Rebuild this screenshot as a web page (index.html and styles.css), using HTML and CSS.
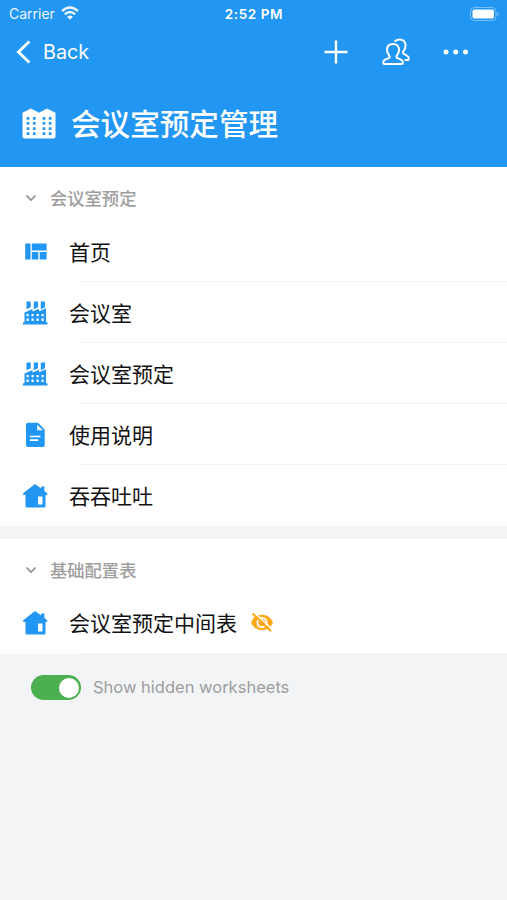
FILE: index.html
```html
<!DOCTYPE html>
<html lang="zh-CN">
<head>
<meta charset="utf-8">
<meta name="viewport" content="width=device-width, initial-scale=1">
<title>会议室预定管理</title>
<link rel="stylesheet" href="styles.css">
</head>
<body>
<svg class="defs" width="0" height="0" aria-hidden="true">
  <symbol id="factory" viewBox="0 0 26 26">
    <path d="M4.500 1.500h4.200v5.800L4.500 9.300zM11.800 1.500H16v5.800l-4.200 2zM18.800 1.500H23v5.800l-4.200 2zM2.500 12.500l8-3.500v2.500l6.500-2.800v2.500l7-3V23H2.500zM1 22.200h24.500v2.300H1z"/>
    <path class="cut" d="M4.500 14h2.200v2.300H4.500zM9.500 14h2.200v2.300H9.500zM14.500 14h2.200v2.300h-2.200zM19.500 14h2.200v2.300h-2.200zM4.500 18.600h2.200v2.300H4.500zM9.500 18.600h2.200v2.300H9.500zM14.500 18.600h2.200v2.300h-2.200zM19.500 18.600h2.200v2.300h-2.200z"/>
  </symbol>
  <symbol id="home" viewBox="0 0 26 26">
    <path d="M13 1l6.200 4.500V3.500h3.200V8l2.800 2.200v1.800h-1.700v11a1.500 1.500 0 0 1-1.500 1.500H5A1.500 1.500 0 0 1 3.500 23V12H1.200v-1.800z"/>
    <path class="cut" d="M16 13.500h4.500v8H16z"/>
  </symbol>
  <symbol id="chevron" viewBox="0 0 12 8"><path d="M1.500 1.500L6 6l4.500-4.500"/></symbol>
</svg>
<header class="header">
  <div class="status">
    <div class="carrier"><span>Carrier</span>
      <svg class="wifi" viewBox="0 0 18 14"><path d="M1 5Q9-2 17 5M3.800 8.300q5.200-4.400 10.400 0"/><path class="dot" d="M6 10.800Q9 8.400 12 10.800L9 13.800z"/></svg>
    </div>
    <div class="time">2:52 PM</div>
    <svg class="battery" viewBox="0 0 30 14"><rect class="shell" x=".5" y=".5" width="25.500" height="13" rx="4"/><rect x="2.500" y="2.500" width="21.500" height="9" rx="2"/><path class="tip" d="M27.500 5q2.500 2 0 4z"/></svg>
  </div>
  <nav class="nav">
    <a class="back"><svg viewBox="0 0 16 24"><path d="M13.300 1.500L2.500 12l10.800 10.500"/></svg>Back</a>
    <div class="actions">
      <svg class="plus" viewBox="0 0 24 24"><path d="M12 .5v23M.5 12h23"/></svg>
      <svg class="people" viewBox="0 0 28 28"><path d="M11 5.900C7 5.900 5 8.500 5 11.800c0 2.400.8 4.200 2.100 5.500 1 1.100.7 2.300-.6 2.900l-3.300 1.400C1.900 22.200 1.200 23 1.200 24.800q0 1.200 1.200 1.200h17.300q1.200 0 1.200-1.200c0-1.800-.7-2.600-2-3.200l-3.300-1.400c-1.300-.6-1.600-1.800-.6-2.900 1.300-1.300 2.100-3.100 2.100-5.500 0-3.300-2.100-5.900-6.100-5.900z"/><path d="M12.500 3.700c1.200-1.600 2.900-2.300 5-2.300 4 0 6 2.700 6 6 0 2.400-.7 4.300-1.900 5.600-1 1.200-.7 2.500.6 3.200l2.300 1.200c1.600.8 2.300 1.800 2.300 3.400q0 1.200-1.200 1.200h-3"/></svg>
      <svg class="more" viewBox="0 0 26 6"><circle cx="3" cy="3" r="2.500"/><circle cx="12.700" cy="3" r="2.500"/><circle cx="22.500" cy="3" r="2.500"/></svg>
    </div>
  </nav>
  <div class="title">
    <svg class="building" viewBox="0 0 34 31"><path fill-rule="evenodd" d="M9 .5l8 4.200 8-4.200 8.500 4.200V28a2.500 2.500 0 0 1-2.500 2.500H3A2.500 2.500 0 0 1 .5 28V4.700zM4.700 9v2.700h2.700V9zm6.200 0v2.700h2.700V9zm9.700 0v2.700h2.700V9zm6.200 0v2.700h2.700V9zM4.700 14v2.700h2.700V14zm6.200 0v2.700h2.700V14zm9.700 0v2.700h2.700V14zm6.200 0v2.700h2.700V14zM4.700 19.200v2.700h2.700v-2.700zm6.200 0v2.700h2.700v-2.700zm9.700 0v2.700h2.700v-2.700zm6.200 0v2.700h2.700v-2.700zM4.700 24.300V27h2.700v-2.700zm6.200 0V27h2.700v-2.700zm9.700 0V27h2.700v-2.700zm6.200 0V27h2.700v-2.700z"/></svg>
    <h1>会议室预定管理</h1>
  </div>
</header>
<main>
  <section class="group">
    <h2><svg class="chevron"><use href="#chevron"/></svg><span>会议室预定</span></h2>
    <ul>
      <li><svg class="icon" viewBox="0 0 26 26"><path d="M3.200 4.500h5.300v16H3.200zM9.800 4.500h14.800v7H9.800zM9.800 12.900h6.500v7.600H9.800zM17.700 12.900h6.900v7.600h-6.900z"/></svg><span>首页</span></li>
      <li><svg class="icon"><use href="#factory"/></svg><span>会议室</span></li>
      <li><svg class="icon"><use href="#factory"/></svg><span>会议室预定</span></li>
      <li><svg class="icon" viewBox="0 0 26 26"><path d="M6 .8h10l6.700 7V23.300a1.700 1.700 0 0 1-1.700 1.700H5.700A1.700 1.700 0 0 1 4 23.300V2.800a2 2 0 0 1 2-2z"/><path class="cut" d="M15.200 2.800v5.500h5.600z"/><path class="lines" d="M7.800 14.500h10.700M7.800 18.200h8.500"/></svg><span>使用说明</span></li>
      <li><svg class="icon"><use href="#home"/></svg><span>吞吞吐吐</span></li>
    </ul>
  </section>
  <section class="group">
    <h2><svg class="chevron"><use href="#chevron"/></svg><span>基础配置表</span></h2>
    <ul>
      <li><svg class="icon"><use href="#home"/></svg><span>会议室预定中间表</span>
        <svg class="hidden-mark" viewBox="0 0 24 20"><path d="M1 9.500C3 4.500 7 1.800 12 1.800s9 2.700 11 7.700c-2 5-6 7.700-11 7.700S3 14.500 1 9.500z"/><circle class="ring" cx="12" cy="9.500" r="4.600"/><path class="gap" d="M4.200-.7l18.500 17.500"/><path class="slash" d="M2.500.5l18.500 17.800"/></svg>
      </li>
    </ul>
  </section>
  <div class="setting"><span class="switch"></span><span class="label">Show hidden worksheets</span></div>
</main>
</body>
</html>
```
FILE: styles.css
```css
* { box-sizing: border-box; }
body {
  margin: 0;
  min-height: 100vh;
  background: #f2f4f6;
  color: #111;
  font-family: Inter, "Noto Sans CJK SC", sans-serif;
}
svg { display: block; flex: none; overflow: visible; }
.defs { position: absolute; }

.header { height: 167px; background: #2196f3; color: #fff; fill: #fff; }
.status {
  display: grid;
  grid-template-columns: 1fr auto 1fr;
  align-items: center;
  height: 28px;
  padding: 0 7px 0 9px;
}
.carrier { display: flex; align-items: center; gap: 6px; font-size: 14px; opacity: .92; }
.carrier span { margin-top: -2px; }
.wifi { width: 18px; height: 14px; margin-top: -2px; }
.wifi path { fill: none; stroke: #fff; stroke-width: 2.400; }
.wifi .dot { fill: #fff; stroke: none; }
.time { font-weight: 600; font-size: 13.500px; letter-spacing: .6px; margin-right: 1px; }
.battery { width: 30px; height: 14px; justify-self: end; margin-top: -1px; }
.battery .shell { fill: none; stroke: #fff; stroke-opacity: .4; }
.battery .tip { fill-opacity: .5; }

.nav { display: flex; align-items: center; justify-content: space-between; height: 48px; padding: 0 38px 0 16px; }
.back { display: flex; align-items: center; gap: 11px; font-size: 19.800px; }
.back svg { width: 16px; height: 24px; fill: none; stroke: #fff; stroke-width: 3; }
.actions { display: flex; align-items: center; }
.plus { width: 24px; height: 24px; stroke: #fff; stroke-width: 2.400; }
.people { width: 28px; height: 28px; margin-left: 34px; fill: none; stroke: #fff; stroke-width: 2; }
.more { width: 26px; height: 6px; margin-left: 33px; }

.title { display: flex; align-items: center; gap: 15px; height: 94px; padding-left: 22px; }
.building { width: 34px; height: 31px; }
h1 { margin: 0; padding-top: 1px; font-size: 29.600px; line-height: 40px; font-weight: 500; }

.group { background: #fff; }
.group + .group { margin-top: 13px; }
h2 {
  display: flex;
  align-items: center;
  height: 54px;
  margin: 0;
  padding: 8px 0 0 25px;
  gap: 13px;
  font-size: 17.300px;
  font-weight: 500;
  color: #9e9e9e;
}
h2 span { margin-top: -2px; }
.chevron { width: 12px; height: 8px; fill: none; stroke: #8e8e8e; stroke-width: 1.700; }
ul { margin: 0; padding: 0; list-style: none; }
li {
  display: flex;
  align-items: center;
  height: 61px;
  padding-left: 22px;
  font-size: 21px;
  background: linear-gradient(#f3f3f3, #f3f3f3) 80px 100% / 100% 1px no-repeat;
}
li span { margin-top: -2px; }
.group + .group li span { margin-top: -4px; }
.group:first-child li:last-child { background: none; }
.icon { width: 26px; height: 26px; margin-right: 21px; fill: #2196f3; }
.group + .group .icon { margin-top: -2px; }
.cut { fill: #fff; }
.lines { stroke: #fff; stroke-width: 1.700; }
.hidden-mark { width: 24px; height: 20px; margin: -1px 0 0 13px; fill: #ffa91a; }
.ring { fill: none; stroke: #fff; stroke-width: 1.800; }
.gap { stroke: #fff; stroke-width: 1.200; }
.slash { stroke: #ffa91a; stroke-width: 2; }

.setting { display: flex; align-items: center; gap: 12px; padding: 21px 31px; font-size: 16.500px; color: #9e9e9e; }
.label { margin-top: -1px; }
.switch { display: flex; justify-content: flex-end; width: 50px; height: 25px; padding: 2.500px; border-radius: 13px; background: #4caf50; }
.switch::after { content: ""; width: 20px; height: 20px; border-radius: 50%; background: #fff; }
```
